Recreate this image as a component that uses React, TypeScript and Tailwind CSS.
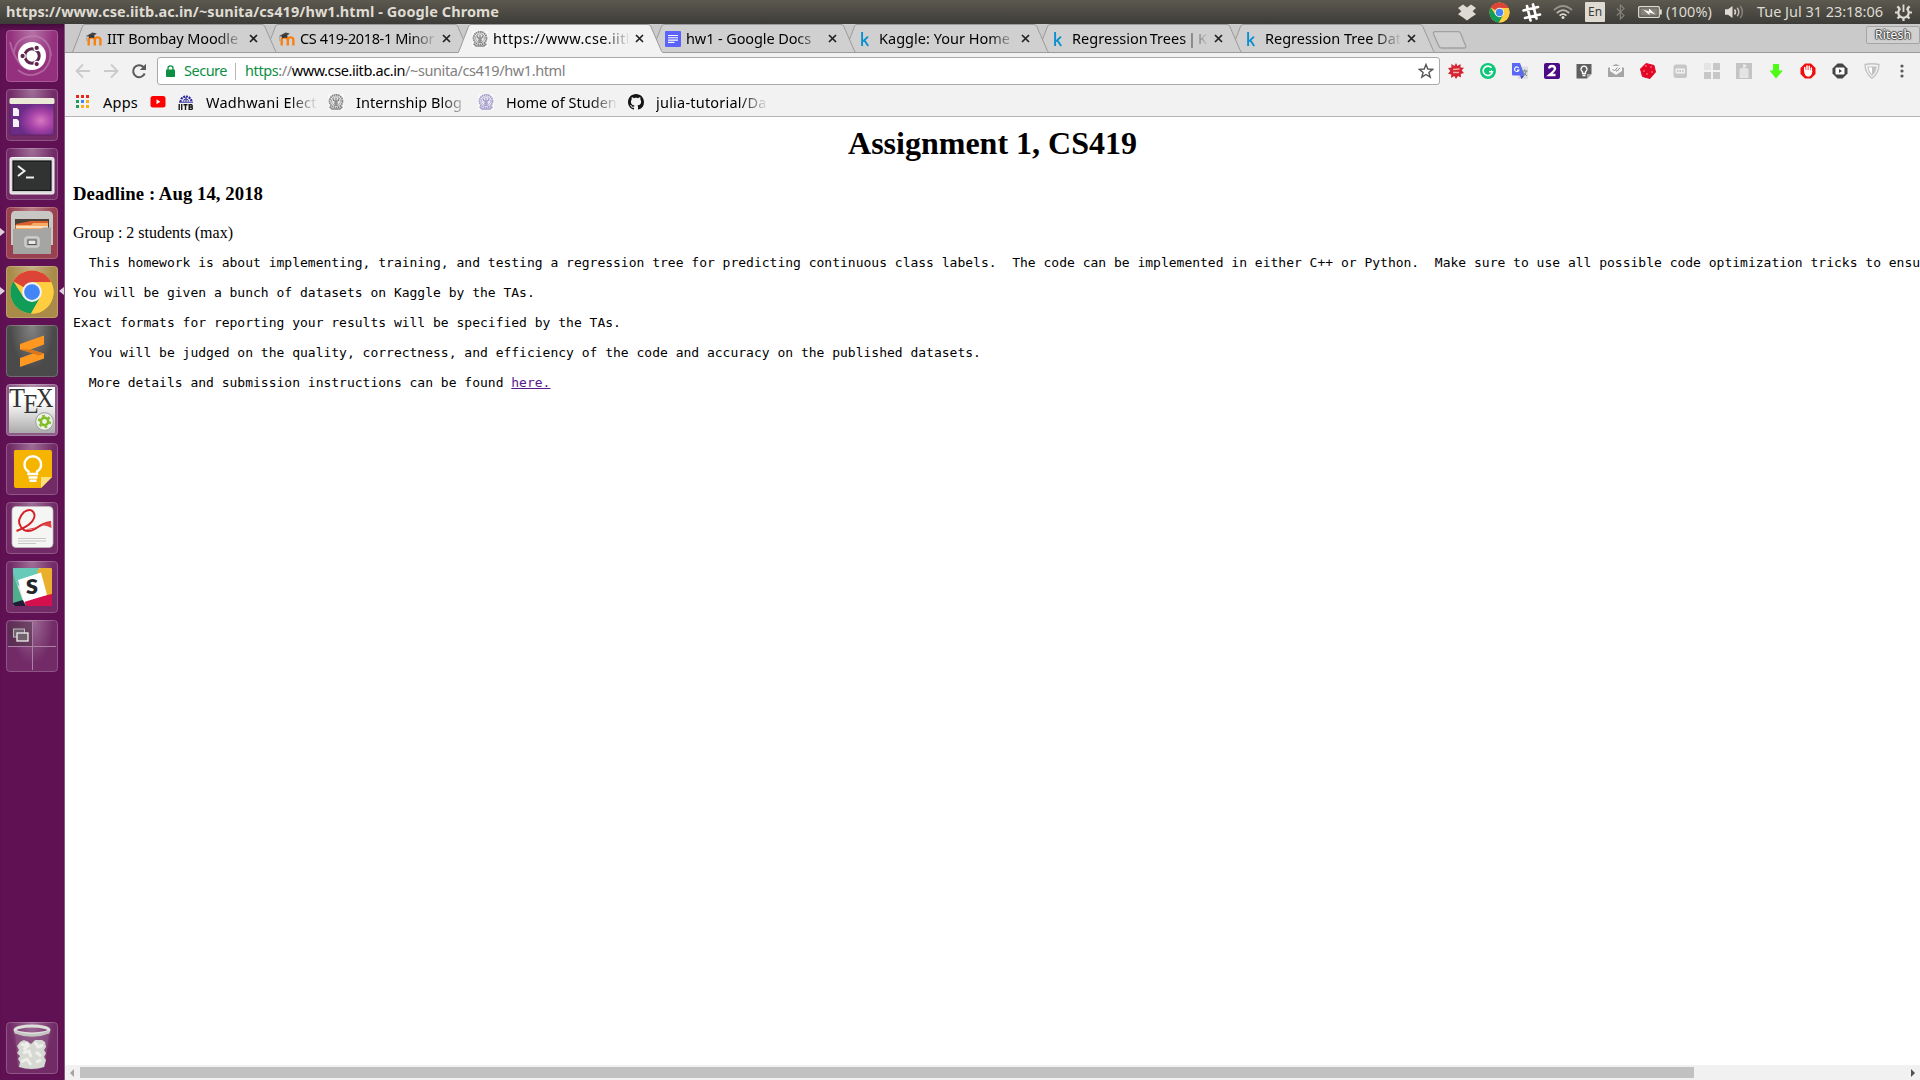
import { useLayoutEffect, useRef, useState } from 'react';
import type { ReactNode } from 'react';

/* Text whose letter spacing is computed so that it spans the given width. */
function Fit({ w, className = '', children }: { w: number; className?: string; children: ReactNode }) {
  const ref = useRef<HTMLSpanElement>(null);
  const [spacing, setSpacing] = useState(0);
  useLayoutEffect(() => {
    const el = ref.current;
    if (!el) return;
    const n = (el.textContent || '').length;
    setSpacing((s) => s + (w - el.getBoundingClientRect().width) / n);
  }, [w]);
  return (
    <span ref={ref} className={`inline-block whitespace-pre ${className}`} style={{ letterSpacing: `${spacing}px` }}>
      {children}
    </span>
  );
}

function ChromeLogo({ size }: { size: number }) {
  return (
    <svg width={size} height={size} viewBox="0 0 48 48">
      <circle cx="24" cy="24" r="23" fill="#ffcd40" />
      <path d="M24 24 4.1 12.5A23 23 0 0 1 43.9 12.5L43.9 13.5 24 13.5Z" fill="#db4437" />
      <path d="M4.1 12.5A23 23 0 0 0 23 47L33 29 24 34 15 29.5Z" fill="#0f9d58" />
      <path d="M24 13.5H44.4A23 23 0 0 1 23 47L33.2 29.2Z" fill="#ffcd40" />
      <circle cx="24" cy="24" r="10.6" fill="#f1f1f1" />
      <circle cx="24" cy="24" r="8.4" fill="#4285f4" />
    </svg>
  );
}

function Crest({ color, bg }: { color: string; bg: string }) {
  return (
    <svg width="16" height="16" viewBox="0 0 16 16" className="shrink-0">
      <rect width="16" height="16" fill={bg} />
      <circle cx="8" cy="7.2" r="6.4" fill="none" stroke={color} strokeWidth="1.9" strokeDasharray="1.6 .5" />
      <circle cx="8" cy="7.2" r="4.5" fill={color} fillOpacity=".15" stroke={color} strokeWidth=".7" />
      <path d="M5.4 4.6V6Q8 9 10.600 6V4.600M8 4V11M6 9.200H10M5.800 11.200H10.200" stroke={color} strokeWidth="1.200" fill="none" />
      <path d="M1.600 12.600 4 15H12L14.400 12.600" stroke={color} strokeWidth="1.500" fill="none" />
    </svg>
  );
}

function Moodle() {
  return (
    <svg width="16" height="16" viewBox="0 0 16 16">
      <path d="M2.7 14.5V8.8Q2.7 6.6 5.6 6.6T8.8 8.8V14.5M8.8 8.8Q8.9 6.4 11.6 6.4T14.4 9V14.500" stroke="#f98012" strokeWidth="2.4" fill="none" />
      <path d="M.2 5 6.5 1.4 10.8 2.6 6 6.2Z" fill="#444" />
      <path d="M3 5.2Q6 3.4 8.6 5L8 7Q5.5 6 3 7.4Z" fill="#333" />
      <path d="M.8 5V10" stroke="#777" strokeWidth=".5" />
    </svg>
  );
}

function DocsIcon() {
  return (
    <svg width="16" height="16" viewBox="0 0 16 16">
      <rect width="16" height="16" rx="1" fill="#5b63fa" />
      <path d="M3 4.5H13M3 6.8H13M3 9.1H13M3 11.4H9.5" stroke="#fff" strokeWidth="1.1" />
    </svg>
  );
}

function KaggleIcon() {
  return (
    <svg width="16" height="16" viewBox="0 0 16 16">
      <path d="M4.100 1V15M10 5.6 5 10.4M6.200 9 10.200 15" stroke="#0a8fd0" strokeWidth="1.9" fill="none" />
    </svg>
  );
}

type TabData = { title: string; width: number; icon: ReactNode; z: string; active?: boolean; tight?: boolean };

const tabs: TabData[] = [
  { title: 'IIT Bombay Moodle', width: 131, icon: <Moodle />, z: 'z-[7]' },
  { title: 'CS 419-2018-1 Minor', width: 134, icon: <Moodle />, z: 'z-[6]' },
  { title: 'https://www.cse.iitb', width: 142, icon: <Crest color="#858585" bg="#f8f8f8" />, z: 'z-10', active: true },
  { title: 'hw1 - Google Docs', width: 125, icon: <DocsIcon />, z: 'z-[5]' },
  { title: 'Kaggle: Your Home', width: 131, icon: <KaggleIcon />, z: 'z-[4]' },
  { title: 'Regression Trees | K', width: 135, icon: <KaggleIcon />, z: 'z-[3]', tight: true },
  { title: 'Regression Tree Dat', width: 136, icon: <KaggleIcon />, z: 'z-[2]' },
];

function Tab({ title, width, icon, z, active, tight }: TabData) {
  const fill = active ? '#f2f2f2' : '#d0d0d0';
  return (
    <div className={`relative -mr-3 h-[29px] w-[205px] shrink-0 ${z}`}>
      <svg className="absolute inset-0" width="205" height="29" viewBox="0 0 205 29">
        <path d="M0 29 1 27.5 10.5 2.5Q11.2.5 13 .5H190Q192 .5 192.8 2.5L203.5 27.5 205 29Z" fill={fill} />
        <path d="M0 28.5 1 27 10.5 2.5Q11.2.5 13 .5H190Q192 .5 192.8 2.5L203.5 27 205 28.5" fill="none" stroke="#9b9b9b" />
        {!active && <path d="M0 28.5H205" stroke="#9b9b9b" />}
      </svg>
      <div className="relative flex h-[29px] items-center pl-[14px]">
        <div className="w-4 shrink-0">{icon}</div>
        <div className="ml-[5px] w-[135px] overflow-hidden pb-px [mask-image:linear-gradient(to_right,#000_110px,transparent_137px)]">
          <Fit w={width} className={tight ? 'block text-[14.5px] leading-[22px] [word-spacing:-2px]' : 'block text-[14.5px] leading-[22px]'}>{title}</Fit>
        </div>
        <svg className="ml-[7px]" width="9" height="9" viewBox="0 0 9 9">
          <path d="M1 1 8 8M8 1 1 8" stroke="#222" strokeWidth="1.7" />
        </svg>
      </div>
    </div>
  );
}

function TopPanel() {
  return (
    <header className="flex h-6 shrink-0 items-center bg-gradient-to-b from-[#5c594f] to-[#3d3c38] pl-[6px] text-[14.5px] text-[#dfdbd2]">
      <Fit w={493} className="font-bold">https://www.cse.iitb.ac.in/~sunita/cs419/hw1.html - Google Chrome</Fit>
      <div className="ml-auto flex h-6 items-center">
        <svg className="mr-[13px]" width="18" height="17" viewBox="0 0 18 17">
          <path d="M5 .5 9 3.4 13 .5 18 4 14.6 7.3 18 10.3 13 13.4 9 16.5 5 13.4 0 10.3 3.4 7.3 0 4Z" fill="#dfdbd2" />
        </svg>
        <ChromeLogo size={21} />
        <svg className="ml-[11px] mr-[11px]" width="21" height="21" viewBox="0 0 21 21">
          <path d="M6 4 9.500 18.500M12 2.500 15.500 16.500M2.500 8.500 17 5M4 16 19 12.500" stroke="#fff" strokeWidth="2.700" strokeLinecap="round" />
        </svg>
        <svg className="mr-[12px]" width="20" height="16" viewBox="0 0 20 16" fill="none" strokeWidth="1.7">
          <path d="M1 6Q10-2 19 6" stroke="#97948b" />
          <path d="M3.8 9Q10 3.4 16.2 9" stroke="#bdb9b0" />
          <path d="M6.6 11.7Q10 8.6 13.4 11.7" stroke="#dfdbd2" />
          <circle cx="10" cy="13.6" r="1.5" fill="#dfdbd2" />
        </svg>
        <div className="flex h-5 w-5 items-center justify-center rounded-[1px] bg-[#dfdbd2] text-[12px] text-[#3c3b37]">En</div>
        <svg className="ml-[11px] mr-[13px]" width="9" height="16" viewBox="0 0 9 16" fill="none" stroke="#85827a" strokeWidth="1.2">
          <path d="M.8 4.5 8 11.4 4.4 15V1L8 4.6.8 11.5" />
        </svg>
        <svg width="24" height="12" viewBox="0 0 24 12">
          <rect x=".7" y=".7" width="20.6" height="10.6" rx="1" fill="none" stroke="#dfdbd2" strokeWidth="1.3" />
          <rect x="2.3" y="2.3" width="17.4" height="7.4" fill="#85827a" />
          <rect x="22" y="3.5" width="1.8" height="5" fill="#dfdbd2" />
          <path d="M5 3.400 11 5.500 11 2.600 17.500 8.500 11.400 6.600 11.600 9.300Z" fill="#fff" />
        </svg>
        <Fit w={46} className="ml-[4px]">(100%)</Fit>
        <svg className="ml-[13px]" width="20" height="16" viewBox="0 0 20 16" fill="none" strokeWidth="1.5">
          <path d="M0 5.3H3L7.5 2V14L3 10.7H0Z" fill="#dfdbd2" />
          <path d="M9.5 5.5Q11.5 8 9.5 10.5" stroke="#dfdbd2" />
          <path d="M12.2 3.7Q15.4 8 12.2 12.3" stroke="#c0bcb3" />
          <path d="M15.2 2Q19.6 8 15.2 14" stroke="#85827a" />
        </svg>
        <Fit w={126} className="ml-[12px]">Tue Jul 31 23:18:06</Fit>
        <svg className="ml-[12px] mr-[8px]" width="17" height="17" viewBox="0 0 17 17" fill="none" stroke="#dfdbd2">
          <path d="M5.4 4.4A5.2 5.2 0 1 0 11.6 4.4" strokeWidth="2.2" />
          <path d="M8.5 .5V8" strokeWidth="1.8" />
          <path d="M2.4 2.4 4.6 4.6M14.6 2.4 12.4 4.6M0 8.5H3M17 8.5H14M2.5 14.5 4.6 12.4M14.5 14.5 12.4 12.4M8.5 14V17" strokeWidth="2.2" />
        </svg>
      </div>
    </header>
  );
}

const launcherItems: { name: string; bg: string; art: ReactNode; running?: boolean; focused?: boolean }[] = [
  {
    name: 'dash', bg: 'bg-[#94307d]',
    art: (
      <>
        <path d="M8 25Q8 6 30 6Q44 10 45 26M12 40Q24 50 38 40Q46 32 44 20M4 12Q10 36 24 40" stroke="#c183b3" strokeWidth="2" fill="none" opacity=".6" />
        <circle cx="26" cy="26" r="14" fill="#fff" />
        <circle cx="26" cy="26" r="7.200" fill="none" stroke="#5e2750" strokeWidth="3" />
        <g fill="#5e2750" stroke="#fff" strokeWidth="1.1">
          <circle cx="16.600" cy="26" r="2.7" /><circle cx="30.7" cy="17.9" r="2.7" /><circle cx="30.7" cy="34.1" r="2.7" />
        </g>
      </>
    ),
  },
  {
    name: 'desktop', bg: 'bg-[#722b67]',
    art: (
      <>
        <defs><radialGradient id="desk" cx=".7" cy=".6"><stop offset="0" stopColor="#d878c0" /><stop offset=".5" stopColor="#a843a8" /><stop offset="1" stopColor="#6b2c88" /></radialGradient></defs>
        <rect x="4" y="10" width="44" height="36" rx="1.5" fill="url(#desk)" stroke="#5a1d5c" strokeWidth=".7" />
        <rect x="3.5" y="9" width="45" height="6" rx="1.5" fill="#ebe9d8" />
        <path d="M7 19H11L13 21V27H7ZM7 30H11L13 32V38H7Z" fill="#f5f0f5" />
      </>
    ),
  },
  {
    name: 'terminal', bg: 'bg-[#722b67]',
    art: (
      <>
        <rect x="4" y="9.500" width="44" height="36.500" rx="1.500" fill="#dedede" stroke="#f5f5f5" />
        <rect x="7" y="13" width="38" height="29.500" fill="#303331" stroke="#111" strokeWidth="1.2" />
        <path d="M12 18 18.500 23 12 28M20 29.500H28" stroke="#eee" strokeWidth="2" fill="none" />
      </>
    ),
  },
  {
    name: 'files', bg: 'bg-[#994150]', running: true,
    art: (
      <>
        <path d="M8 4H43Q47 5 47 9V38H5V9Q5 5 8 4Z" fill="#c8c7c4" />
        <rect x="9" y="12" width="34" height="12" fill="#4b4036" />
        <path d="M10 17 25 14 42 14V25H10Z" fill="#d9602f" />
        <path d="M9.500 18H25L27 16H42V25H9.500Z" fill="#f7ad65" />
        <path d="M10 20H42" stroke="#fff1dd" strokeWidth="1.300" />
        <path d="M7 22H33Q36 22 37 20.500H45V47H7Z" fill="#a5a5a3" />
        <rect x="19" y="30" width="14" height="10" rx="2" fill="#bbb" stroke="#e2e2e2" />
        <rect x="22" y="33" width="8" height="4.500" fill="#e9e9e9" stroke="#555" />
      </>
    ),
  },
  { name: 'chrome', bg: 'bg-[#a98a48]', running: true, focused: true, art: <svg x="3.500" y="3.500" width="45" height="45"><ChromeLogo size={45} /></svg> },
  {
    name: 'editor', bg: 'bg-[#4a4a4a]',
    art: (
      <>
        <path d="M14 19 38 10.500V19.500L24.500 24.500 38 28.500V33.500L14 42V33L27.500 28.300 14 24.500Z" fill="#ff9821" />
        <path d="M14 24.500 24.500 24.500 38 28.500 33 30.500Z" fill="#d9761b" />
      </>
    ),
  },
  {
    name: 'tex', bg: 'bg-[#8c5a86]',
    art: (
      <>
        <defs><linearGradient id="tex" x2="0" y2="1"><stop offset=".3" stopColor="#fff" /><stop offset="1" stopColor="#aaa" /></linearGradient></defs>
        <rect x="3" y="3" width="46" height="46" fill="url(#tex)" />
        <g fontFamily="Liberation Serif, serif" fontSize="28" fill="#333"><text x="3" y="22.500" textLength="16" lengthAdjust="spacingAndGlyphs">T</text><text x="17.500" y="28.500" textLength="15" lengthAdjust="spacingAndGlyphs">E</text><text x="30" y="22.500" textLength="17.500" lengthAdjust="spacingAndGlyphs">X</text></g>
        <circle cx="38.500" cy="37.500" r="8.800" fill="#f0f0ee" stroke="#999" />
        <circle cx="38.500" cy="37.500" r="3.700" fill="none" stroke="#7fbf20" strokeWidth="2.500" />
        <circle cx="38.500" cy="37.500" r="5.700" fill="none" stroke="#7fbf20" strokeWidth="2" strokeDasharray="2.600 3.370" />
      </>
    ),
  },
  {
    name: 'keep', bg: 'bg-[#722b67]',
    art: (
      <>
        <path d="M9 7H44Q46 7 46 9V34L35 45H10Q8 45 8 43V9Q8 7 9 7Z" fill="#f4b400" />
        <path d="M35 45V34H46Z" fill="#ffe07c" />
        <path d="M22.500 31V28.500Q18.500 26 18.500 21.500A8.300 8.300 0 0 1 35.100 21.500Q35.100 26 31 28.500V31ZM22.500 34.500H31.500M23.500 37.800H30.500" stroke="#fff" strokeWidth="2.400" fill="none" />
      </>
    ),
  },
  {
    name: 'reader', bg: 'bg-[#722b67]',
    art: (
      <>
        <rect x="6" y="4.500" width="41" height="41" rx="4" fill="#f5f5f3" stroke="#bbb" strokeWidth=".800" />
        <path d="M10.500 29Q29 22 28.500 12.500Q26 5 18 10Q10 18 15 25Q20 32 29 27Q37 21 45 20" stroke="#d41f26" strokeWidth="1.900" fill="none" />
        <path d="M19 27.500Q30 26 37 22Q41 20 45 20L45.500 26Q38 22 33 24Q26 29 19 27.500Z" fill="#e04444" />
        <path d="M12 36.500H40M12 39H40M12 41.500H30" stroke="#bbb" strokeWidth=".800" />
      </>
    ),
  },
  {
    name: 'slack', bg: 'bg-[#722b67]',
    art: (
      <>
        <rect x="7" y="7" width="39" height="38" rx="2" fill="#e8e8e8" />
        <path d="M7 7H33L37 17 12 25 7 13Z" fill="#67c9b8" />
        <path d="M34 7H44Q46 7 46 9V34L40 36 31 10Z" fill="#eab02d" />
        <path d="M46 33V45H20L18 39Z" fill="#d40f4d" />
        <path d="M7 12 18 43 7 45Z" fill="#4fae8b" />
        <path d="M7 42 17 39 20 45H9Q7 45 7 43Z" fill="#231a36" />
        <path d="M12 19 35 11.500 41 34 18 41Z" fill="#fff" />
        <text x="26" y="33" textAnchor="middle" fontFamily="Lato, sans-serif" fontWeight="900" fontSize="28" fill="#25262b">s</text>
      </>
    ),
  },
  {
    name: 'workspaces', bg: 'bg-[#722b67]',
    art: (
      <>
        <rect x="2" y="2" width="24" height="24" fill="#503048" opacity=".6" />
        <path d="M26.500 2V50M2 26.500H50" stroke="#a983a5" />
        <rect x="7.500" y="9" width="11" height="8" fill="#70616d" stroke="#bbb" />
        <rect x="11" y="13" width="11" height="8" fill="#70616d" stroke="#eee" strokeWidth="1.300" />
      </>
    ),
  },
];

function Tile({ bg, children }: { bg: string; children: ReactNode }) {
  return (
    <div className={`relative size-[52px] overflow-hidden rounded-[4px] ${bg}`}>
      <div className="absolute inset-0 bg-[radial-gradient(ellipse_at_top,rgba(255,255,255,0.32),rgba(255,255,255,0)_60%)]" />
      <svg className="relative block" width="52" height="52" viewBox="0 0 52 52">{children}</svg>
      <div className="absolute inset-0 rounded-[4px] border border-white/20" />
    </div>
  );
}

function Launcher() {
  return (
    <aside className="flex w-[65px] shrink-0 flex-col border-r border-[#8b5584] bg-[#601153] pb-[6px] pt-[6px] shadow-[inset_0_6px_6px_-4px_rgba(0,0,0,0.4)]">
      <div className="flex flex-col gap-[7px]">
        {launcherItems.map((it) => (
          <div key={it.name} className="relative pl-[6px]">
            <Tile bg={it.bg}>{it.art}</Tile>
            {it.running && <div className="absolute left-0 top-[21px] border-y-[4px] border-l-[5px] border-y-transparent border-l-[#dcd0da]" />}
            {it.focused && <div className="absolute right-0 top-[21px] border-y-[4px] border-r-[5px] border-y-transparent border-r-[#dcd0da]" />}
          </div>
        ))}
      </div>
      <div className="mt-auto pl-[6px]">
        <Tile bg="bg-[#722b67]">
          <path d="M9 11 12 45Q26 50 39 45L43 11Z" fill="#8d5a86" opacity=".6" />
          <path d="M11 24 14 20 18 18 22 20 25 22 29 18 36 18 39 20 40 25 38 28 40 31 38 35 40 38 38 45Q26 49 13 45L14 40 12 37 14 34 11 31 13 28Z" fill="#d6d8d2" />
          <path d="M15 22 21 24 18 28M29 20 32 25 37 23M17 31 23 29 25 35M30 30 35 34M15 40 21 37 25 43M30 40 35 38M20 20 23 25" stroke="#eeefeb" strokeWidth="3" fill="none" strokeLinejoin="round" />
          <ellipse cx="26" cy="8" rx="17" ry="4" fill="none" stroke="#dfe0dc" strokeWidth="3" />
          <path d="M8.500 10Q26 17 43.500 10" stroke="#c4c6c1" strokeWidth="2.500" fill="none" />
        </Tile>
      </div>
    </aside>
  );
}

const extensions: ReactNode[] = [
  <>
    <path d="M8 0 9.500 3 12.500 1 12.600 4.400 16 4.700 13.700 7.500 16 10 12.700 11 13 14.500 10 13 8 16 6.200 13 3 15 3.300 11.500 0 10.800 2.300 8 0 5 3.500 4.500 3.300 1 6.500 3Z" fill="#d5232f" />
    <path d="M5 6.500 11.500 6M5 9.500H11" stroke="#f3a9a9" strokeWidth="1.300" />
  </>,
  <>
    <circle cx="8" cy="8" r="8" fill="#0cc777" />
    <path d="M11.500 4.800A4.700 4.700 0 1 0 12.500 8.700H9" stroke="#fff" strokeWidth="1.600" fill="none" />
    <path d="M10.800 6.800 13.200 8.700 11.500 11.300" fill="#fff" />
  </>,
  <>
    <rect x="6" y="3.500" width="10" height="12.500" fill="#dfdfdf" />
    <path d="M0 0H8L12.500 12.500H1Q0 12.500 0 11.500Z" fill="#5b67f5" />
    <path d="M8 12.500H12.500L9.500 16Z" fill="#3b48c8" />
    <path d="M6.800 5A2.300 2.300 0 1 0 7 7H5" stroke="#fff" strokeWidth="1.100" fill="none" />
    <path d="M10 8H15.500M12.700 6.500V8M14.500 8Q13.500 11.500 10.800 12.500M11 8.500Q12 11 15 12.800" stroke="#6f858d" strokeWidth="1" fill="none" />
  </>,
  <>
    <rect width="16" height="16" rx="2" fill="#4b0a86" />
    <path d="M5 5.500Q5.400 3 8 3T11 5.500Q11 7.500 5.500 12H11.500" stroke="#fff" strokeWidth="2.300" fill="none" />
  </>,
  <>
    <path d="M.500 1H15.500V11L11 15.500H.500Z" fill="#5f5f5f" />
    <path d="M11 15.500V11H15.500Z" fill="#aaa" />
    <path d="M6.500 10.500V8.800A3 3 0 1 1 9.500 8.800V10.500ZM6.500 12.500H9.500" stroke="#fff" strokeWidth="1.300" fill="none" />
  </>,
  <>
    <path d="M0 5 8 1 16 5V14H0Z" fill="#a5a5a5" />
    <path d="M2 3H14V8L8 12 2 8Z" fill="#f5f5f5" />
    <path d="M4.500 6 6.500 8 9.500 4.500M8 7.500 9 8.300 12 4.800" stroke="#8d8d8d" strokeWidth="1" fill="none" />
  </>,
  <>
    <path d="M6 .500 14 2.500 15.500 9 10 15.500 2.500 13.500 .500 6Z" fill="#e40725" stroke="#e40725" strokeLinejoin="round" />
    <g fill="#ffb9c2"><circle cx="6" cy="3" r=".700" /><circle cx="11" cy="4" r=".700" /><circle cx="4" cy="8" r=".700" /><circle cx="7" cy="11" r=".700" /><circle cx="12" cy="9" r=".700" /></g>
  </>,
  <>
    <rect x="1.500" y="1.500" width="13.500" height="13.500" rx="2.500" fill="#c7c7c7" />
    <rect x="3.500" y="5.500" width="9.500" height="5" rx="1" fill="#f1f1f1" />
    <path d="M5 8H12" stroke="#b5b5b5" strokeWidth="1.500" strokeDasharray="1.500 1" />
  </>,
  <>
    <path d="M0 0H7V7H0Z" fill="#e4e4e4" /><path d="M9 0H16V7H9ZM0 9H7V16H0ZM9 9H16V16H9Z" fill="#c7c7c7" />
  </>,
  <>
    <rect width="16" height="16" fill="#c4c4c4" />
    <path d="M3.500 6Q8 3.500 12.500 6V15H3.500Z" fill="#e4e4e4" /><path d="M8 5V2L10.500 3" stroke="#eee" strokeWidth="1.500" fill="none" />
  </>,
  <path d="M5 1H11V7.500H15L8 15.500 1.500 7.500H5Z" fill="#4dfb17" />,
  <>
    <path d="M5 .500H11L15.500 5V11L11 15.500H5L.500 11V5Z" fill="#f20d0d" />
    <path d="M4.800 8V4.500M7 7.500V3M9.200 7.500V3.300M11.300 8.500V5M4.800 7.500Q5 13 8.500 13 11 13 11.600 8.500Z" stroke="#fff" strokeWidth="1.500" strokeLinecap="round" fill="#fff" />
  </>,
  <>
    <path d="M5.500 .500H10.500L15.500 5.500V10.500L10.500 15.500H5.500L.500 10.500V5.500Z" fill="#454545" />
    <rect x="3.500" y="4.500" width="9" height="7" rx="1" fill="#fff" /><path d="M7 6 10 8 7 10Z" fill="#454545" />
  </>,
  <>
    <path d="M1 1.500Q8 0 15 1.500Q15 10 8 15.300Q1 10 1 1.500Z" fill="#f3f3f3" stroke="#c2c2c2" strokeWidth="1.300" />
    <path d="M4 4H12Q11.500 9 8 12Q4.500 9 4 4Z" fill="#fff" stroke="#c2c2c2" strokeWidth="1.200" /><path d="M8 4H12Q11.500 9 8 12Z" fill="#c2c2c2" />
  </>,
];

function Bookmark({ icon, label, width, faded }: { icon: ReactNode; label: string; width: number; faded?: boolean }) {
  return (
    <div className="flex items-center gap-3">
      {icon}
      <div className={faded ? 'w-[110px] overflow-hidden [mask-image:linear-gradient(to_right,#000_84px,transparent_112px)]' : ''}>
        <Fit w={width} className="block pb-px text-[14.5px] leading-[22px]">{label}</Fit>
      </div>
    </div>
  );
}

function Toolbar() {
  return (
    <div className="h-16 shrink-0 border-b border-[#b4b4b4] bg-[#f2f2f2]">
      <div className="flex h-9 items-center">
        <svg className="ml-[10px]" width="16" height="16" viewBox="0 0 16 16"><path d="M15 8H2M8 1.500 1.500 8 8 14.500" stroke="#cbcbcb" strokeWidth="1.800" fill="none" /></svg>
        <svg className="ml-[12px]" width="16" height="16" viewBox="0 0 16 16"><path d="M1 8H14M8 1.500 14.500 8 8 14.500" stroke="#cbcbcb" strokeWidth="1.800" fill="none" /></svg>
        <svg className="ml-[12px]" width="16" height="16" viewBox="0 0 16 16"><path d="M13.700 10.500A6 6 0 1 1 12.500 4L14 5.500" stroke="#5a5a5a" strokeWidth="2" fill="none" /><path d="M15 .800V7H8.800Z" fill="#5a5a5a" /></svg>
        <div className="ml-[10px] flex h-7 w-[1283px] items-center rounded-[3px] border border-[#a9a9a9] bg-white text-[14.5px]">
          <svg className="ml-[8px]" width="9" height="12" viewBox="0 0 9 12"><rect y="4.500" width="9" height="7.500" rx=".700" fill="#0b9043" /><path d="M2 5V3Q2 .800 4.500 .800T7 3V5" stroke="#0b9043" strokeWidth="1.300" fill="none" /></svg>
          <Fit w={43} className="ml-[9px] text-[#0b9043]">Secure</Fit>
          <div className="ml-[8px] h-[17px] w-px bg-[#b5b5b5]" />
          <Fit w={320} className="ml-[9px] text-[#808080]"><span className="text-[#0b9043]">https</span>://<span className="text-black">www.cse.iitb.ac.in</span>/~sunita/cs419/hw1.html</Fit>
          <svg className="ml-auto mr-[5px]" width="16" height="16" viewBox="0 0 16 16"><path d="M8 1.500 9.800 6 14.700 6.300 10.900 9.400 12.200 14.200 8 11.500 3.800 14.200 5.100 9.400 1.300 6.300 6.200 6Z" stroke="#555" strokeWidth="1.400" fill="none" /></svg>
        </div>
        <div className="ml-[8px] flex gap-4">
          {extensions.map((art, i) => <svg key={i} width="16" height="16" viewBox="0 0 16 16">{art}</svg>)}
        </div>
        <svg className="ml-[20px]" width="4" height="14" viewBox="0 0 4 14" fill="#5a5a5a"><circle cx="2" cy="2" r="1.600" /><circle cx="2" cy="7" r="1.600" /><circle cx="2" cy="12" r="1.600" /></svg>
      </div>
      <div className="flex h-[25px] items-center pl-[11px]">
        <Bookmark label="Apps" width={35} icon={
          <svg className="mr-[2px]" width="13" height="13" viewBox="0 0 13 13">
            <path d="M0 0H3V3H0ZM5 0H8V3H5ZM10 0H13V3H10Z" fill="#e8261c" /><path d="M0 5H3V8H0ZM0 10H3V13H0Z" fill="#1d9d58" /><path d="M5 5H8V8H5Z" fill="#4285f4" /><path d="M10 5H13V8H10ZM5 10H8V13H5ZM10 10H13V13H10Z" fill="#fbae17" />
          </svg>
        } />
        <svg className="ml-[12px] mr-[12px]" width="16" height="12" viewBox="0 0 16 12"><rect x=".500" width="15" height="11.500" rx="2.500" fill="#f00" /><path d="M6.500 3.300 10.300 5.700 6.500 8.200Z" fill="#fff" /></svg>
        <Bookmark label="Wadhwani Electr" width={117} faded icon={
          <svg width="16" height="16" viewBox="0 0 16 16">
            <path d="M2.500 8A5.500 5.500 0 0 1 13.500 8" stroke="#2e2a9c" strokeWidth="2.200" fill="none" strokeDasharray="2 .800" /><path d="M5.500 7.500A2.500 2.500 0 0 1 10.500 7.500M8 3V8M1 8.200H15" stroke="#2e2a9c" strokeWidth="1" fill="none" />
            <path d="M1.200 10V16M3.700 10V16M5.500 10.700H9.500M7.500 10.700V16M11.200 10.700H13.500Q15 12 13.500 13Q15.500 14.500 13.500 15.400H11.200ZM11.200 13H13.500" stroke="#171717" strokeWidth="1.400" fill="none" />
          </svg>
        } />
        <div className="ml-[12px]"><Bookmark label="Internship Blog" width={106} faded icon={<Crest color="#858585" bg="#f8f8f8" />} /></div>
        <div className="ml-[12px]"><Bookmark label="Home of Student" width={116} faded icon={<Crest color="#a49acb" bg="#f8f8f8" />} /></div>
        <div className="ml-[12px]"><Bookmark label="julia-tutorial/Dat" width={116} faded icon={
          <svg width="16" height="16" viewBox="0 0 16 16"><path fill="#161514" d="M8 0C3.580 0 0 3.580 0 8c0 3.540 2.290 6.530 5.470 7.590.4.070.55-.17.55-.38 0-.19-.01-.82-.01-1.490-2.010.370-2.530-.490-2.690-.940-.090-.230-.480-.940-.820-1.130-.280-.150-.680-.520-.010-.530.630-.010 1.080.580 1.230.820.720 1.210 1.870.870 2.330.660.070-.520.280-.870.510-1.070-1.780-.200-3.640-.890-3.640-3.950 0-.870.310-1.590.820-2.150-.080-.200-.360-1.020.080-2.120 0 0 .670-.210 2.200.820.640-.180 1.320-.270 2-.270s1.360.090 2 .270c1.530-1.040 2.200-.820 2.200-.820.440 1.100.160 1.920.080 2.120.510.560.820 1.270.820 2.150 0 3.070-1.870 3.750-3.650 3.950.290.250.540.730.540 1.480 0 1.070-.010 1.930-.010 2.200 0 .210.150.460.550.380A8 8 0 0 0 16 8c0-4.420-3.580-8-8-8Z" /></svg>
        } /></div>
      </div>
    </div>
  );
}

const copy = [
  '  This homework is about implementing, training, and testing a regression tree for predicting continuous class labels.  The code can be implemented in either C++ or Python.  Make sure to use all possible code optimization tricks to ensure',
  'You will be given a bunch of datasets on Kaggle by the TAs.',
  'Exact formats for reporting your results will be specified by the TAs.',
  '  You will be judged on the quality, correctness, and efficiency of the code and accuracy on the published datasets.',
];

export default function App() {
  return (
    <div className="flex h-[1080px] w-[1920px] flex-col overflow-hidden bg-white font-['Noto_Sans',sans-serif] text-black">
      <TopPanel />
      <div className="flex min-h-0 flex-1">
        <Launcher />
        <div className="flex min-w-0 flex-1 flex-col">
          <div className="flex h-[29px] shrink-0 border-b border-[#9b9b9b] bg-[#cacaca] pl-[7px]">
            {tabs.map((t) => <Tab key={t.title} {...t} />)}
            <svg className="ml-[9px] mt-[7px]" width="36" height="18" viewBox="0 0 36 18"><path d="M3 .700H26Q28 .700 28.700 2.500L33.700 15Q34.500 17 32.500 17H9.500Q7.500 17 6.800 15L1.500 3Q.800 .700 3 .700Z" fill="#d0d0d0" stroke="#a1a1a1" strokeWidth="1.300" /></svg>
            <div className="ml-auto mt-[2px] flex h-[18px] w-[54px] items-center justify-center rounded-[2px] border border-[#a5a5a5] bg-[#d1d1d1] text-[12px] text-white [text-shadow:1px_0_1px_#444,-1px_0_1px_#444,0_1px_1px_#444,0_-1px_1px_#444]">
              <Fit w={36}>Ritesh</Fit>
            </div>
          </div>
          <Toolbar />
          <main className="min-h-0 flex-1 overflow-hidden p-2 font-['Liberation_Serif',serif]">
            <h1 className="text-center text-[32px] font-bold leading-[37px]">Assignment 1, CS419</h1>
            <h3 className="mt-[21px] text-[18.72px] font-bold leading-[21px]"><Fit w={190}>Deadline : Aug 14, 2018</Fit></h3>
            <p className="mt-[20px] text-base leading-[18px]">Group : 2 students (max)</p>
            <div className="mt-[13px] flex flex-col gap-[15px] whitespace-pre font-['DejaVu_Sans_Mono',monospace] text-[13px] leading-[15px]">
              {copy.map((line) => <p key={line}>{line}</p>)}
              <p>{'  More details and submission instructions can be found '}<a className="text-[#551a8b] underline">here.</a></p>
            </div>
          </main>
          <div className="flex h-[15px] shrink-0 items-center bg-[#f1f1f1]">
            <div className="ml-[5px] border-y-[4px] border-r-[4px] border-y-transparent border-r-[#a3a3a3]" />
            <div className="ml-[6px] h-[11px] w-[1614px] bg-[#c1c1c1]" />
            <div className="ml-auto mr-[5px] border-y-[4px] border-l-[4px] border-y-transparent border-l-[#505050]" />
          </div>
        </div>
      </div>
    </div>
  );
}
